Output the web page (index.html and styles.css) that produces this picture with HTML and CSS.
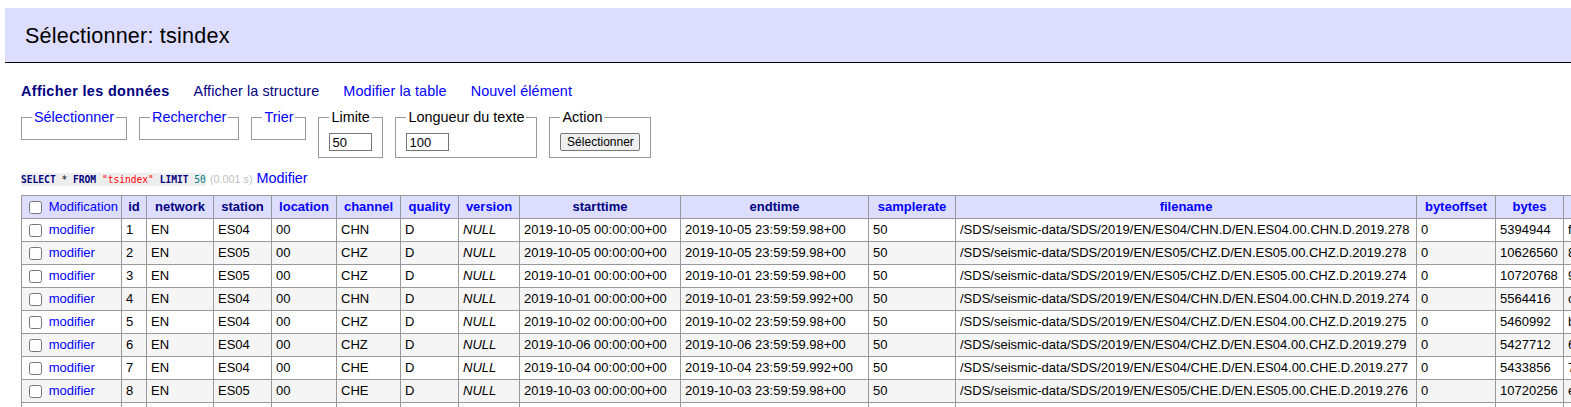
FILE: index.html
```html
<!DOCTYPE html>
<html lang="fr">
<head>
<meta charset="utf-8">
<title>Sélectionner: tsindex</title>
<link rel="stylesheet" href="styles.css">
</head>
<body>
<h2 class="title">Sélectionner: tsindex</h2>
<div class="content">
  <p class="links"><a class="visited active" href="#">Afficher les données</a> <a class="visited" href="#">Afficher la structure</a> <a href="#">Modifier la table</a> <a href="#">Nouvel élément</a></p>
  <form class="filters">
    <fieldset class="fs"><legend><a href="#">Sélectionner</a></legend></fieldset>
    <fieldset class="fs"><legend><a href="#">Rechercher</a></legend></fieldset>
    <fieldset class="fs"><legend><a href="#">Trier</a></legend></fieldset>
    <fieldset class="fs"><legend>Limite</legend><input class="num" type="text" value="50"></fieldset>
    <fieldset class="fs"><legend>Longueur du texte</legend><input class="num" type="text" value="100"></fieldset>
    <fieldset class="fs"><legend>Action</legend><button class="btn" type="button">Sélectionner</button></fieldset>
  </form>
  <p class="query"><code class="sql"><b class="kw">SELECT</b> * <b class="kw">FROM</b> <span class="ident">"tsindex"</span> <b class="kw">LIMIT</b> <span class="numlit">50</span></code> <span class="time">(0.001 s)</span> <a href="#">Modifier</a></p>
  <table class="data">
    <colgroup>
      <col class="c-mod"><col class="c-id"><col class="c-net"><col class="c-sta"><col class="c-loc"><col class="c-cha"><col class="c-qua"><col class="c-ver"><col class="c-start"><col class="c-end"><col class="c-rate"><col class="c-file"><col class="c-off"><col class="c-bytes"><col class="c-hash"><col class="c-tidx">
    </colgroup>
    <thead>
      <tr>
        <td class="sel"><input type="checkbox"> <a href="#">Modification</a></td>
        <th><a class="visited" href="#">id</a></th>
        <th><a class="visited" href="#">network</a></th>
        <th><a class="visited" href="#">station</a></th>
        <th><a href="#">location</a></th>
        <th><a href="#">channel</a></th>
        <th><a href="#">quality</a></th>
        <th><a href="#">version</a></th>
        <th><a class="visited" href="#">starttime</a></th>
        <th><a class="visited" href="#">endtime</a></th>
        <th><a href="#">samplerate</a></th>
        <th><a href="#">filename</a></th>
        <th><a href="#">byteoffset</a></th>
        <th><a href="#">bytes</a></th>
        <th><a href="#">hash</a></th>
        <th><a href="#">timeindex</a></th>
      </tr>
    </thead>
    <tbody>
      <tr><td class="sel"><input type="checkbox"> <a href="#">modifier</a></td><td>1</td><td>EN</td><td>ES04</td><td>00</td><td>CHN</td><td>D</td><td class="null">NULL</td><td>2019-10-05 00:00:00+00</td><td>2019-10-05 23:59:59.98+00</td><td>50</td><td>/SDS/seismic-data/SDS/2019/EN/ES04/CHN.D/EN.ES04.00.CHN.D.2019.278</td><td>0</td><td>5394944</td><td>f3a91c07be52d84e6a1f09c3d27b5e86</td><td>1570233600=&gt;0,latest=&gt;4</td></tr>
      <tr><td class="sel"><input type="checkbox"> <a href="#">modifier</a></td><td>2</td><td>EN</td><td>ES05</td><td>00</td><td>CHZ</td><td>D</td><td class="null">NULL</td><td>2019-10-05 00:00:00+00</td><td>2019-10-05 23:59:59.98+00</td><td>50</td><td>/SDS/seismic-data/SDS/2019/EN/ES05/CHZ.D/EN.ES05.00.CHZ.D.2019.278</td><td>0</td><td>10626560</td><td>8c2e47d19a0b6f35e1d874c2a90f3b61</td><td>1570233600=&gt;0,latest=&gt;8</td></tr>
      <tr><td class="sel"><input type="checkbox"> <a href="#">modifier</a></td><td>3</td><td>EN</td><td>ES05</td><td>00</td><td>CHZ</td><td>D</td><td class="null">NULL</td><td>2019-10-01 00:00:00+00</td><td>2019-10-01 23:59:59.98+00</td><td>50</td><td>/SDS/seismic-data/SDS/2019/EN/ES05/CHZ.D/EN.ES05.00.CHZ.D.2019.274</td><td>0</td><td>10720768</td><td>9b71d0e4c38a2f56b09e17d4a3c65f28</td><td>1569888000=&gt;0,latest=&gt;8</td></tr>
      <tr><td class="sel"><input type="checkbox"> <a href="#">modifier</a></td><td>4</td><td>EN</td><td>ES04</td><td>00</td><td>CHN</td><td>D</td><td class="null">NULL</td><td>2019-10-01 00:00:00+00</td><td>2019-10-01 23:59:59.992+00</td><td>50</td><td>/SDS/seismic-data/SDS/2019/EN/ES04/CHN.D/EN.ES04.00.CHN.D.2019.274</td><td>0</td><td>5564416</td><td>c0d5a83e71f92b46e8a03c5d17b9e24f</td><td>1569888000=&gt;0,latest=&gt;4</td></tr>
      <tr><td class="sel"><input type="checkbox"> <a href="#">modifier</a></td><td>5</td><td>EN</td><td>ES04</td><td>00</td><td>CHZ</td><td>D</td><td class="null">NULL</td><td>2019-10-02 00:00:00+00</td><td>2019-10-02 23:59:59.98+00</td><td>50</td><td>/SDS/seismic-data/SDS/2019/EN/ES04/CHZ.D/EN.ES04.00.CHZ.D.2019.275</td><td>0</td><td>5460992</td><td>b6e2f19a04c7d583e1b02a9f6c4d7e35</td><td>1569974400=&gt;0,latest=&gt;4</td></tr>
      <tr><td class="sel"><input type="checkbox"> <a href="#">modifier</a></td><td>6</td><td>EN</td><td>ES04</td><td>00</td><td>CHZ</td><td>D</td><td class="null">NULL</td><td>2019-10-06 00:00:00+00</td><td>2019-10-06 23:59:59.98+00</td><td>50</td><td>/SDS/seismic-data/SDS/2019/EN/ES04/CHZ.D/EN.ES04.00.CHZ.D.2019.279</td><td>0</td><td>5427712</td><td>6a93c0e58b2d1f74e06c39a5d8b2f41e</td><td>1570320000=&gt;0,latest=&gt;4</td></tr>
      <tr><td class="sel"><input type="checkbox"> <a href="#">modifier</a></td><td>7</td><td>EN</td><td>ES04</td><td>00</td><td>CHE</td><td>D</td><td class="null">NULL</td><td>2019-10-04 00:00:00+00</td><td>2019-10-04 23:59:59.992+00</td><td>50</td><td>/SDS/seismic-data/SDS/2019/EN/ES04/CHE.D/EN.ES04.00.CHE.D.2019.277</td><td>0</td><td>5433856</td><td>7d18e5b2a0c94f63d7e21b08c5a3f96d</td><td>1570147200=&gt;0,latest=&gt;4</td></tr>
      <tr><td class="sel"><input type="checkbox"> <a href="#">modifier</a></td><td>8</td><td>EN</td><td>ES05</td><td>00</td><td>CHE</td><td>D</td><td class="null">NULL</td><td>2019-10-03 00:00:00+00</td><td>2019-10-03 23:59:59.98+00</td><td>50</td><td>/SDS/seismic-data/SDS/2019/EN/ES05/CHE.D/EN.ES05.00.CHE.D.2019.276</td><td>0</td><td>10720256</td><td>e2b06f4d93a1c87e50d2b64f1a9c03d7</td><td>1570060800=&gt;0,latest=&gt;8</td></tr>
      <tr><td class="sel"><input type="checkbox"> <a href="#">modifier</a></td><td>9</td><td>EN</td><td>ES05</td><td>00</td><td>CHN</td><td>D</td><td class="null">NULL</td><td>2019-10-02 00:00:00+00</td><td>2019-10-02 23:59:59.98+00</td><td>50</td><td>/SDS/seismic-data/SDS/2019/EN/ES05/CHN.D/EN.ES05.00.CHN.D.2019.275</td><td>0</td><td>10715136</td><td>a4c7e91f0b36d25e8f1a04c7b9d3e62f</td><td>1569974400=&gt;0,latest=&gt;8</td></tr>
      <tr><td class="sel"><input type="checkbox"> <a href="#">modifier</a></td><td>10</td><td>EN</td><td>ES04</td><td>00</td><td>CHE</td><td>D</td><td class="null">NULL</td><td>2019-10-05 00:00:00+00</td><td>2019-10-05 23:59:59.98+00</td><td>50</td><td>/SDS/seismic-data/SDS/2019/EN/ES04/CHE.D/EN.ES04.00.CHE.D.2019.278</td><td>0</td><td>5402112</td><td>3f0e8b27c1d94a56e3b70f2d18c6a95b</td><td>1570233600=&gt;0,latest=&gt;4</td></tr>
    </tbody>
  </table>
</div>
</body>
</html>
```

FILE: styles.css
```css
html {
  overflow: hidden;
}

body {
  margin: 8px 0 0 5px;
  width: fit-content;
  font-family: "Liberation Sans", Arial, sans-serif;
  font-size: 14.4px;
  color: #000;
  background: #fff;
}

a {
  color: blue;
  text-decoration: none;
}

a.visited {
  color: navy;
}

.title {
  margin: 0;
  padding: 15px 20px 13px;
  font-size: 21.6px;
  line-height: 26px;
  font-weight: normal;
  letter-spacing: 0.2px;
  color: #000;
  background: #ddf;
  border-bottom: 1px solid #000;
}

.content {
  padding-left: 16px;
}

.links {
  margin: 19px 0 0;
  line-height: 18px;
  white-space: nowrap;
}

.links a {
  margin-right: 20px;
  letter-spacing: 0.1px;
}

.links .active {
  font-weight: bold;
  letter-spacing: 0.35px;
}

.filters {
  display: flex;
  align-items: flex-start;
  gap: 12px;
  margin: 9px 0 0;
}

.fs {
  margin: 0;
  padding: 8px 10px 6px;
  border: 1px solid #999;
  min-width: 0;
}

.fs legend {
  padding: 0 2px;
  line-height: 16px;
  white-space: nowrap;
}

.num {
  display: block;
  box-sizing: border-box;
  width: 43px;
  height: 18px;
  margin: 0;
  padding: 0 2px;
  border: 1px solid #767676;
  font-family: "Liberation Sans", Arial, sans-serif;
  font-size: 13px;
  color: #000;
}

.btn {
  display: block;
  box-sizing: border-box;
  width: 80px;
  height: 18px;
  margin: 0;
  padding: 0;
  border: 1px solid #767676;
  border-radius: 2px;
  background: #efefef;
  font-family: "Liberation Sans", Arial, sans-serif;
  font-size: 12px;
  line-height: 14px;
  color: #000;
}

.query {
  margin: 11px 0 0;
  line-height: 18px;
  white-space: nowrap;
}

.sql {
  font-family: "DejaVu Sans Mono", "Liberation Mono", monospace;
  font-size: 9.6px;
  background: #eee;
  color: #000;
  padding: 1px 0;
}

.sql .kw {
  color: navy;
  font-weight: bold;
}

.sql .ident {
  color: red;
}

.sql .numlit {
  color: #007f7f;
}

.time {
  color: silver;
  font-size: 10.8px;
}

.data {
  table-layout: fixed;
  width: 1992px;
  margin: 6px 0 0;
  border-collapse: collapse;
  font-size: 13px;
}

.c-mod { width: 100px; }
.c-id { width: 25px; }
.c-net { width: 67px; }
.c-sta { width: 58px; }
.c-loc { width: 65px; }
.c-cha { width: 64px; }
.c-qua { width: 58px; }
.c-ver { width: 61px; }
.c-start { width: 161px; }
.c-end { width: 188px; }
.c-rate { width: 87px; }
.c-file { width: 461px; }
.c-off { width: 79px; }
.c-bytes { width: 68px; }
.c-hash { width: 260px; }
.c-tidx { width: 190px; }

.data td,
.data th {
  border: 1px solid #999;
  padding: 3px 3px 3px 4px;
  line-height: 16px;
  white-space: nowrap;
  text-align: left;
  font-weight: normal;
  vertical-align: middle;
}

.data thead td,
.data thead th {
  background: #ddf;
}

.data thead th {
  text-align: center;
  padding: 3px 4px;
  font-weight: bold;
}

.data tbody tr:nth-child(2n) {
  background: #f5f5f5;
}

.data input[type="checkbox"] {
  margin: 0 3px 0 3px;
  vertical-align: middle;
  width: 13px;
  height: 13px;
}

.data .null {
  font-style: italic;
}
```
